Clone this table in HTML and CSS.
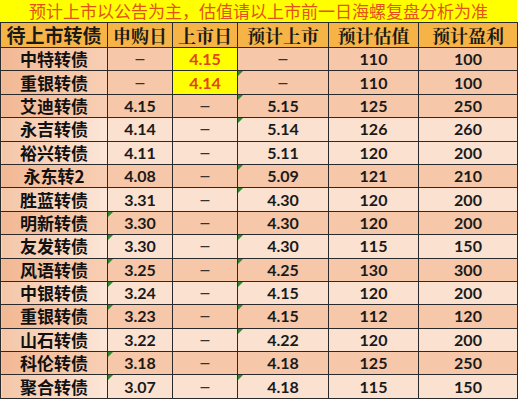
FILE: index.html
```html
<!DOCTYPE html>
<html>
<head>
<meta charset="utf-8">
<link rel="stylesheet" href="styles.css">
</head>
<body>
<div class="sheet">
  <div class="title">预计上市以公告为主，估值请以上市前一日海螺复盘分析为准</div>
  <table class="grid">
    <colgroup>
      <col class="c1"><col class="c2"><col class="c3"><col class="c4"><col class="c5"><col class="c6">
    </colgroup>
    <thead>
      <tr>
        <th class="name-h">待上市转债</th>
        <th>申购日</th>
        <th>上市日</th>
        <th>预计上市</th>
        <th>预计估值</th>
        <th>预计盈利</th>
      </tr>
    </thead>
    <tbody>
      <tr class="dark"><td class="name">中特转债</td><td class="dash">–</td><td class="hl">4.15</td><td class="dash">–</td><td>110</td><td>100</td></tr>
      <tr class="dark"><td class="name">重银转债</td><td class="dash">–</td><td class="hl">4.14</td><td class="dash mark">–</td><td>110</td><td>100</td></tr>
      <tr class="dark"><td class="name">艾迪转债</td><td>4.15</td><td class="dash">–</td><td class="mark">5.15</td><td>125</td><td>250</td></tr>
      <tr class="light"><td class="name">永吉转债</td><td>4.14</td><td class="dash">–</td><td class="mark">5.14</td><td>126</td><td>260</td></tr>
      <tr class="light"><td class="name">裕兴转债</td><td>4.11</td><td class="dash">–</td><td>5.11</td><td>120</td><td>200</td></tr>
      <tr class="dark"><td class="name">永东转2</td><td>4.08</td><td class="dash">–</td><td class="mark">5.09</td><td>121</td><td>210</td></tr>
      <tr class="light"><td class="name">胜蓝转债</td><td>3.31</td><td class="dash">–</td><td class="mark">4.30</td><td>120</td><td>200</td></tr>
      <tr class="dark"><td class="name">明新转债</td><td class="mark">3.30</td><td class="dash">–</td><td>4.30</td><td>120</td><td>200</td></tr>
      <tr class="light"><td class="name">友发转债</td><td class="mark">3.30</td><td class="dash">–</td><td class="mark">4.30</td><td>115</td><td>150</td></tr>
      <tr class="dark"><td class="name">风语转债</td><td class="mark">3.25</td><td class="dash">–</td><td class="mark">4.25</td><td>130</td><td>300</td></tr>
      <tr class="light"><td class="name">中银转债</td><td class="mark">3.24</td><td class="dash">–</td><td class="mark">4.15</td><td>120</td><td>200</td></tr>
      <tr class="dark"><td class="name">重银转债</td><td class="mark">3.23</td><td class="dash">–</td><td class="mark">4.15</td><td>112</td><td>120</td></tr>
      <tr class="light"><td class="name">山石转债</td><td>3.22</td><td class="dash">–</td><td class="mark">4.22</td><td>120</td><td>200</td></tr>
      <tr class="dark"><td class="name">科伦转债</td><td class="mark">3.18</td><td class="dash">–</td><td>4.18</td><td>125</td><td>250</td></tr>
      <tr class="light"><td class="name">聚合转债</td><td class="mark">3.07</td><td class="dash">–</td><td class="mark">4.18</td><td>115</td><td>150</td></tr>
    </tbody>
  </table>
</div>
</body>
</html>
```
FILE: styles.css
```css
html, body {
  margin: 0;
  padding: 0;
  background: #ffffff;
}
.sheet {
  width: 517px;
}
.title {
  height: 22px;
  line-height: 22px;
  background: #ffff00;
  color: #e2531b;
  font-family: "Noto Sans CJK SC", sans-serif;
  font-size: 17px;
  text-align: center;
  white-space: nowrap;
}
.grid {
  width: 517px;
  border-collapse: collapse;
  table-layout: fixed;
}
.c1 { width: 107px; }
.c2 { width: 65px; }
.c3 { width: 65px; }
.c4 { width: 91px; }
.c5 { width: 90px; }
.c6 { width: 99px; }
.grid th, .grid td {
  border: 1px solid #2a2a2a;
  padding: 0;
  text-align: center;
  vertical-align: middle;
  white-space: nowrap;
}
.grid th {
  height: 24px;
  background: #f7b446;
  color: #1a1a1a;
  font-family: "Noto Serif CJK SC", "Noto Sans CJK SC", serif;
  font-weight: 700;
  font-size: 18px;
  line-height: 22px;
}
.grid th.name-h {
  font-family: "Noto Sans CJK SC", sans-serif;
  font-size: 19px;
}
.grid td {
  height: 22.4px;
  font-family: Lato, "Noto Sans CJK SC", sans-serif;
  font-weight: 700;
  font-size: 16px;
  line-height: 20px;
  color: #1a1a1a;
  position: relative;
}
.grid td.name {
  font-family: "Noto Sans CJK SC", sans-serif;
  font-size: 17px;
  color: #111111;
}
.grid td.dash {
  font-family: "Liberation Sans", sans-serif;
  font-weight: 400;
  font-size: 16px;
  color: #333333;
}
.dark td { background: #f6c7a8; }
.light td { background: #fbe1d0; }
.dark td.name { background: linear-gradient(to right, #f2b894, #f8cfb4); }
.light td.name { background: linear-gradient(to right, #f4c6a8, #fce6d8); }
.grid td.hl {
  background: #ffff00;
  color: #e2451b;
}
.grid td.mark::before {
  content: "";
  position: absolute;
  left: 0;
  top: 0;
  border-top: 5px solid #2f8a2f;
  border-right: 5px solid transparent;
}
```
